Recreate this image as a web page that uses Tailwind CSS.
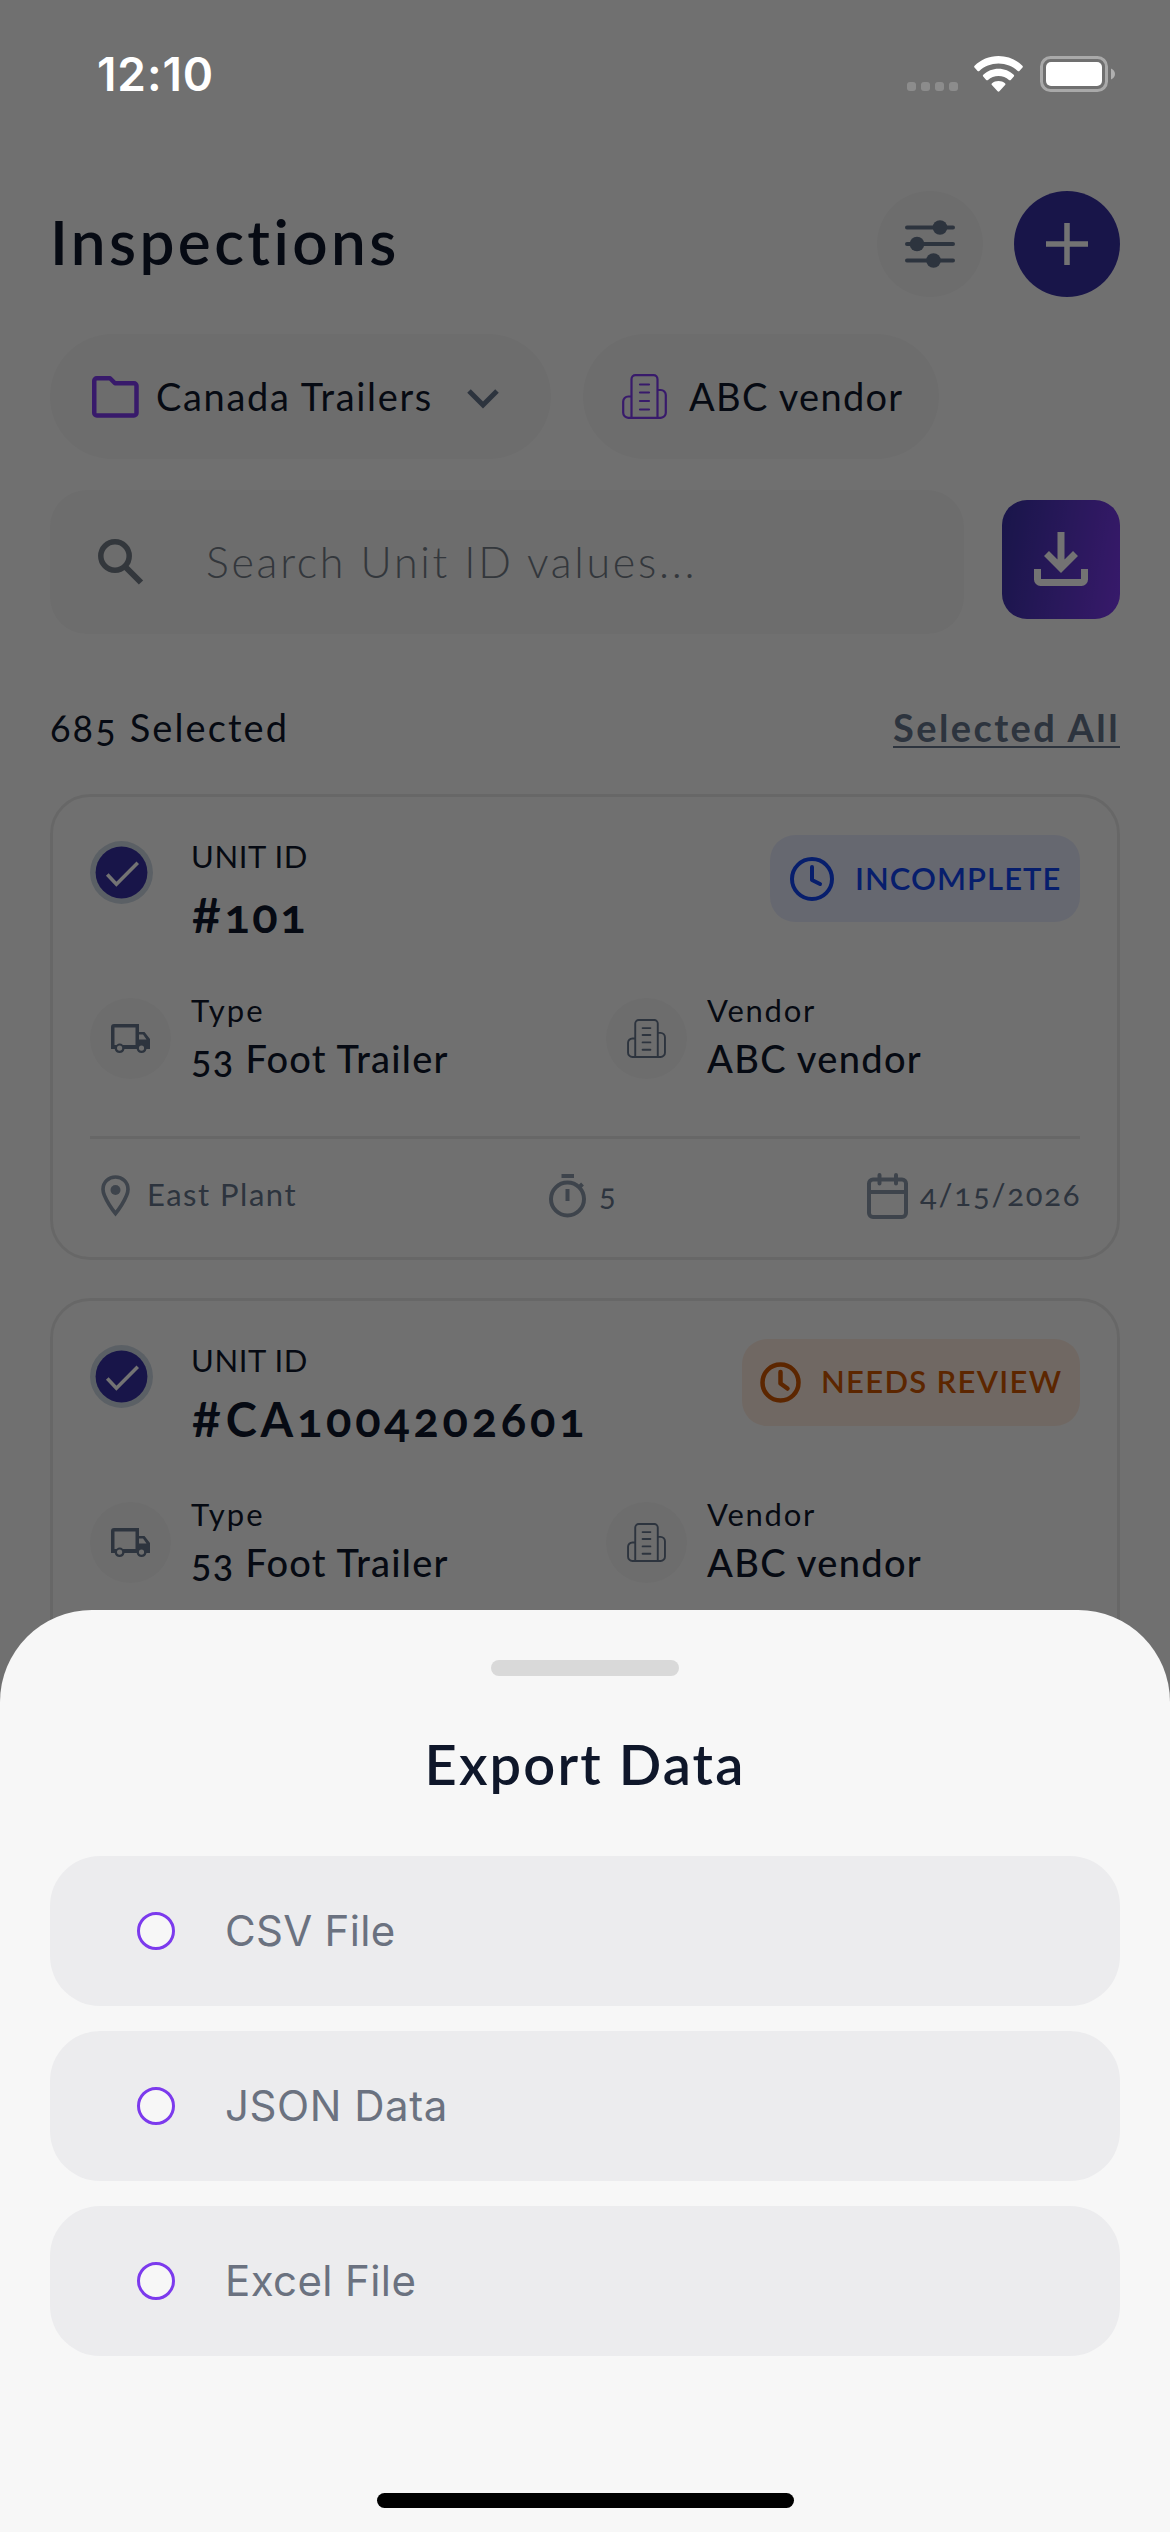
<!DOCTYPE html>
<html lang="en">
<head>
<meta charset="utf-8">
<title>Inspections</title>
<script src="https://cdn.jsdelivr.net/npm/@tailwindcss/browser@4"></script>
</head>
<body class="bg-[#f9f9f9]">
<svg class="hidden">
  <symbol id="building" viewBox="0 0 45 45"><g fill="none" stroke="currentColor" stroke-width="2.200" stroke-linecap="round" stroke-linejoin="round"><path d="M9.500 43.800V5.200a4 4 0 0 1 4-4h18a4 4 0 0 1 4 4v38.600M9.500 22.500H6.200a5 5 0 0 0-5 5V38.800a5 5 0 0 0 5 5h32.600a5 5 0 0 0 5-5V21a5 5 0 0 0-5-5h-3.300"/><path d="M18 10.500h9M18 18.500h9M18 27h9M18 35.500h9"/></g></symbol>
  <symbol id="truck" viewBox="0 0 39 30"><path fill="currentColor" fill-rule="evenodd" d="M3 0h25v8h5.500L39 15v10h-3.500a5 5 0 0 1-9.800 0H13.500a5 5 0 0 1-9.800 0H0V3a3 3 0 0 1 3-3zM3.500 3.500V21h2a5 5 0 0 1 6.500 0h12.500V3.500zM28 10.500V15.500h7.500L32 10.500zM8.600 21.500a2.600 2.600 0 1 0 0 5.200 2.600 2.600 0 0 0 0-5.200zM30.500 21.500a2.600 2.600 0 1 0 0 5.200 2.600 2.600 0 0 0 0-5.200z"/></symbol>
  <symbol id="check" viewBox="0 0 62 62"><circle cx="31" cy="31" r="31" fill="#cbd5e1"/><circle cx="31" cy="31" r="25.500" fill="#3730a3"/><path d="M17 33l9 9.500L47 21.500" fill="none" stroke="#fff" stroke-width="3.500"/></symbol>
</svg>
<div class="relative h-[2532px] w-[1170px] overflow-hidden whitespace-nowrap bg-[#f9f9f9] font-['Lato',sans-serif] text-[#0f172a]">
  <main class="flex flex-col px-[50px] pt-[191px]">
    <header class="flex h-[106px] items-center">
      <h1 class="flex-1 pb-[6px] text-[62px] font-semibold leading-none tracking-[3.400px]">Inspections</h1>
      <div class="mr-[31px] flex size-[106px] items-center justify-center rounded-full bg-[#f1f1f1] text-[#64748b]">
        <svg class="h-[50px] w-[52px]" viewBox="0 0 52 50" fill="currentColor" stroke="currentColor" stroke-width="4" stroke-linecap="round"><path d="M3 8.500h46M3 25h46M3 41.500h46"/><g stroke="none"><circle cx="36" cy="8.500" r="7.300"/><circle cx="13" cy="25" r="7.300"/><circle cx="29.500" cy="41.500" r="7.300"/></g></svg>
      </div>
      <div class="flex size-[106px] items-center justify-center rounded-full bg-[#3730a3]">
        <svg class="size-[42px]" viewBox="0 0 42 42" stroke="#fff" stroke-width="5.500"><path d="M21 0v42M0 21h42"/></svg>
      </div>
    </header>
    <div class="mt-[37px] flex gap-[32px]">
      <div class="flex h-[125px] w-[501px] items-center rounded-full bg-[#f1f1f1] pl-[42px]">
        <svg class="h-[42px] w-[47px] shrink-0" viewBox="0 0 47 42" fill="none" stroke="#7c3aed" stroke-width="4.500" stroke-linejoin="round"><path d="M4.750 2.250h13.250l5 5H42a2.500 2.500 0 0 1 2.500 2.500V37a2.500 2.500 0 0 1-2.500 2.500H4.750a2.500 2.500 0 0 1-2.500-2.500V4.750a2.500 2.500 0 0 1 2.500-2.500z"/></svg>
        <span class="ml-[17px] w-[278px] pb-px text-[38px] tracking-[1.650px]">Canada Trailers</span>
        <svg class="ml-[33px] mt-[4px] h-[20px] w-[32px] shrink-0" viewBox="0 0 32 20" fill="none" stroke="#64748b" stroke-width="5"><path d="M2 2l14 14L30 2"/></svg>
      </div>
      <div class="flex h-[125px] w-[356px] items-center rounded-full bg-[#f1f1f1] pl-[39px]">
        <svg class="size-[45px] shrink-0 text-[#7c3aed]"><use href="#building"/></svg>
        <span class="ml-[22px] pb-px text-[38px] tracking-[1.300px]">ABC vendor</span>
      </div>
    </div>
    <div class="mt-[31px] flex">
      <div class="flex h-[144px] w-[914px] items-center rounded-[37px] bg-[#f1f1f1] pl-[48px]">
        <svg class="size-[46px] shrink-0" viewBox="0 0 46 46" fill="none" stroke="#717a85" stroke-width="5.500"><circle cx="17" cy="17" r="14.200"/><path d="M28 28.500L43 43.500" stroke-width="6"/></svg>
        <span class="ml-[62px] text-[43px] font-light tracking-[2.700px] text-[#717a85]">Search Unit ID values...</span>
      </div>
      <div class="ml-[38px] mt-[10px] flex h-[119px] w-[118px] justify-center rounded-[25px] bg-linear-100/srgb from-[#3730a3] to-[#7c3aed] pt-[32px]">
        <svg class="h-[54px] w-[54px]" viewBox="0 0 54 54" fill="none" stroke="#fff" stroke-width="7"><path d="M27 0v34M12.500 21.500L27 36l14.500-14.500"/><path d="M3.500 37v10.500a3 3 0 0 0 3 3h41a3 3 0 0 0 3-3V37"/></svg>
      </div>
    </div>
    <div class="flex h-[160px] items-center justify-between pt-[26px] text-[38px]">
      <span class="tracking-[2.100px] oldstyle-nums">685 Selected</span>
      <span class="font-bold tracking-[2.400px] text-[#64748b] underline decoration-2 underline-offset-4">Selected All</span>
    </div>

    <section class="flex h-[466px] flex-col rounded-[40px] border-[3px] border-[#e5e5e5] px-[37px] pt-[38px]">
      <div class="flex h-[163px] items-start">
        <svg class="mt-[6px] size-[63px] shrink-0"><use href="#check"/></svg>
        <div class="ml-[38px] mt-px flex flex-1 flex-col">
          <span class="text-[31px] leading-[40px] tracking-[0.600px]">UNIT ID</span>
          <span class="mt-[9px] text-[47px] font-bold leading-[60px] tracking-[2.500px] oldstyle-nums"><span class="lining-nums">#</span>101</span>
        </div>
        <div class="flex h-[87px] w-[310px] shrink-0 items-center rounded-[25px] bg-[#e3e7f9] pl-[20px] text-[#1044f0]">
          <svg class="size-[44px] shrink-0" viewBox="0 0 44 44" fill="none" stroke="currentColor" stroke-width="4" stroke-linecap="round" stroke-linejoin="round"><circle cx="22" cy="22" r="20"/><path d="M22 10v13l8 4"/></svg>
          <span class="ml-[21px] pb-px text-[31px] font-semibold tracking-[1.050px]">INCOMPLETE</span>
        </div>
      </div>
      <div class="flex h-[138px] items-start">
        <div class="flex w-[516px]">
          <div class="flex size-[81px] items-center justify-center rounded-full bg-[#f1f1f1] text-[#64748b]"><svg class="h-[30px] w-[39px]"><use href="#truck"/></svg></div>
          <div class="-mt-[3px] ml-[20px] flex flex-col">
            <span class="text-[31px] leading-[30px] tracking-[2.100px]">Type</span>
            <span class="mt-[11px] text-[38px] font-medium leading-[44px] tracking-[1.250px] oldstyle-nums">53 Foot Trailer</span>
          </div>
        </div>
        <div class="flex">
          <div class="flex size-[81px] items-center justify-center rounded-full bg-[#f1f1f1] text-[#64748b]"><svg class="size-[39px]"><use href="#building"/></svg></div>
          <div class="-mt-[3px] ml-[20px] flex flex-col">
            <span class="text-[31px] leading-[30px] tracking-[1.750px]">Vendor</span>
            <span class="mt-[11px] text-[38px] font-medium leading-[44px] tracking-[1.300px]">ABC vendor</span>
          </div>
        </div>
      </div>
      <div class="h-[3px] bg-[#e5e5e5]"></div>
      <div class="flex h-[113px] items-center justify-between text-[31px] text-[#64748b] oldstyle-nums">
        <div class="flex w-[207px] items-center">
          <svg class="ml-[11px] mr-[17px] h-[42px] w-[29px] shrink-0" viewBox="0 0 29 42"><path d="M14.500 2C7.500 2 2 7.300 2 14.300 2 23 14.500 38.500 14.500 38.500S27 23 27 14.300C27 7.300 21.500 2 14.500 2z" fill="none" stroke="#8b98a8" stroke-width="3.700"/><circle cx="14.500" cy="15" r="5" fill="#8b98a8"/></svg>
          <span class="pb-[2px] tracking-[1.500px]">East Plant</span>
        </div>
        <div class="flex w-[66px] items-center">
          <svg class="h-[44px] w-[38px] shrink-0" viewBox="0 0 38 44" fill="none" stroke="#8b98a8" stroke-width="4"><circle cx="18.500" cy="25" r="16.500"/><path d="M12.500 2h12.500M18.500 15v12M30 13.500l3.500-3.500"/></svg>
          <span class="ml-[12px] pb-[2px]">5</span>
        </div>
        <div class="flex w-[213px] items-center">
          <svg class="h-[46px] w-[41px] shrink-0" viewBox="0 0 41 46" fill="none" stroke="#8b98a8" stroke-width="4" stroke-linecap="round"><rect x="2" y="6.500" width="37" height="37.500" rx="4"/><path d="M2 19h37M12.500 2v8.500M29 2v8.500"/></svg>
          <span class="ml-[12px] pb-[2px] tracking-[1.800px]">4/15/2026</span>
        </div>
      </div>
    </section>

    <section class="mt-[38px] flex h-[466px] flex-col rounded-[40px] border-[3px] border-[#e5e5e5] px-[37px] pt-[38px]">
      <div class="flex h-[163px] items-start">
        <svg class="mt-[6px] size-[63px] shrink-0"><use href="#check"/></svg>
        <div class="ml-[38px] mt-px flex flex-1 flex-col">
          <span class="text-[31px] leading-[40px] tracking-[0.600px]">UNIT ID</span>
          <span class="mt-[9px] text-[47px] font-bold leading-[60px] tracking-[3.750px] oldstyle-nums"><span class="lining-nums">#</span>CA1004202601</span>
        </div>
        <div class="flex h-[87px] w-[338px] shrink-0 items-center rounded-[25px] bg-[#f9e7dc] pl-[18px] text-[#cc5500]">
          <svg class="size-[41px] shrink-0" viewBox="0 0 41 41" fill="none" stroke="currentColor" stroke-width="4.500" stroke-linecap="round" stroke-linejoin="round"><circle cx="20.500" cy="20.500" r="18"/><path d="M20.500 10v11.500l7 5"/></svg>
          <span class="ml-[20px] pb-[2px] text-[31px] font-semibold tracking-[1.300px]">NEEDS REVIEW</span>
        </div>
      </div>
      <div class="flex h-[138px] items-start">
        <div class="flex w-[516px]">
          <div class="flex size-[81px] items-center justify-center rounded-full bg-[#f1f1f1] text-[#64748b]"><svg class="h-[30px] w-[39px]"><use href="#truck"/></svg></div>
          <div class="-mt-[3px] ml-[20px] flex flex-col">
            <span class="text-[31px] leading-[30px] tracking-[2.100px]">Type</span>
            <span class="mt-[11px] text-[38px] font-medium leading-[44px] tracking-[1.250px] oldstyle-nums">53 Foot Trailer</span>
          </div>
        </div>
        <div class="flex">
          <div class="flex size-[81px] items-center justify-center rounded-full bg-[#f1f1f1] text-[#64748b]"><svg class="size-[39px]"><use href="#building"/></svg></div>
          <div class="-mt-[3px] ml-[20px] flex flex-col">
            <span class="text-[31px] leading-[30px] tracking-[1.750px]">Vendor</span>
            <span class="mt-[11px] text-[38px] font-medium leading-[44px] tracking-[1.300px]">ABC vendor</span>
          </div>
        </div>
      </div>
    </section>
  </main>

  <div class="absolute inset-0 bg-black/55"></div>

  <div class="absolute left-0 top-0 flex h-[146px] w-full items-center pl-[97px] pr-[55px] font-['Inter',sans-serif] text-white">
    <span class="flex-1 pt-[3px] text-[46px] font-semibold tracking-[0.900px]">12:10</span>
    <div class="mr-[16px] mt-[27px] flex gap-[5px]">
      <i class="size-[9px] rounded-[3px] bg-white/20"></i><i class="size-[9px] rounded-[3px] bg-white/20"></i><i class="size-[9px] rounded-[3px] bg-white/20"></i><i class="size-[9px] rounded-[3px] bg-white/20"></i>
    </div>
    <svg class="mr-[17px] mt-[2px] h-[36px] w-[49px]" viewBox="0 0 49 36" fill="#fff"><path d="M24.500 0C15.200 0 6.800 3.700.6 9.700c-.6.600-.6 1.300-.1 1.900l3.100 3.300c.5.500 1.200.5 1.700 0C10.300 10.300 17 7.500 24.500 7.500s14.200 2.800 19.200 7.400c.5.500 1.200.5 1.700 0l3.100-3.300c.5-.6.500-1.300-.1-1.900C42.200 3.700 33.800 0 24.500 0z"/><path d="M24.500 12.700c-5.900 0-11.200 2.300-15.200 6-.6.500-.6 1.300-.1 1.800l3 3.400c.5.500 1.300.6 1.800.1 2.800-2.500 6.500-4 10.500-4s7.700 1.500 10.500 4c.5.500 1.300.4 1.800-.1l3-3.400c.5-.5.500-1.300-.1-1.800-4-3.700-9.300-6-15.200-6z"/><path d="M24.500 25c-2.500 0-4.700.8-6.500 2.300-.6.500-.6 1.300-.1 1.800l5.700 6.200c.5.600 1.300.6 1.800 0l5.700-6.200c.5-.5.500-1.300-.1-1.800-1.800-1.500-4-2.300-6.500-2.300z"/></svg>
    <svg class="mt-[2px] h-[36px] w-[75px]" viewBox="0 0 75 36"><rect x="1.500" y="1.500" width="65" height="33" rx="9" fill="none" stroke="#fff" stroke-opacity=".4" stroke-width="3"/><rect x="6" y="6" width="56" height="24" rx="5" fill="#fff"/><path d="M71 12.500c2.500 1 4 3 4 5.500s-1.500 4.500-4 5.500z" fill="#fff" fill-opacity=".45"/></svg>
  </div>

  <div class="absolute bottom-0 left-0 flex h-[922px] w-full flex-col items-center rounded-t-[92px] bg-[#f7f7f7] px-[50px] pt-[50px]">
    <div class="h-[16px] w-[188px] rounded-full bg-[#d9d9d9]"></div>
    <h2 class="mt-[53px] text-[56px] font-semibold leading-[70px] tracking-[2.100px]">Export Data</h2>
    <div class="mt-[57px] flex w-full flex-col gap-[25px] font-['Inter',sans-serif] text-[42px] text-[#6b7280]">
      <div class="flex h-[150px] items-center rounded-[50px] bg-[#ececee] pl-[87px] tracking-[0.300px]"><i class="mr-[50px] size-[38px] rounded-full border-[3px] border-[#7c3aed] bg-[#f7f7f7]"></i><span class="pb-[2px]">CSV File</span></div>
      <div class="flex h-[150px] items-center rounded-[50px] bg-[#ececee] pl-[87px] tracking-[0.550px]"><i class="mr-[50px] size-[38px] rounded-full border-[3px] border-[#7c3aed] bg-[#f7f7f7]"></i><span class="pb-[2px]">JSON Data</span></div>
      <div class="flex h-[150px] items-center rounded-[50px] bg-[#ececee] pl-[87px] tracking-[0.400px]"><i class="mr-[50px] size-[38px] rounded-full border-[3px] border-[#7c3aed] bg-[#f7f7f7]"></i><span class="pb-[2px]">Excel File</span></div>
    </div>
    <div class="mt-[137px] h-[15px] w-[417px] shrink-0 rounded-full bg-black"></div>
  </div>
</div>
</body>
</html>
